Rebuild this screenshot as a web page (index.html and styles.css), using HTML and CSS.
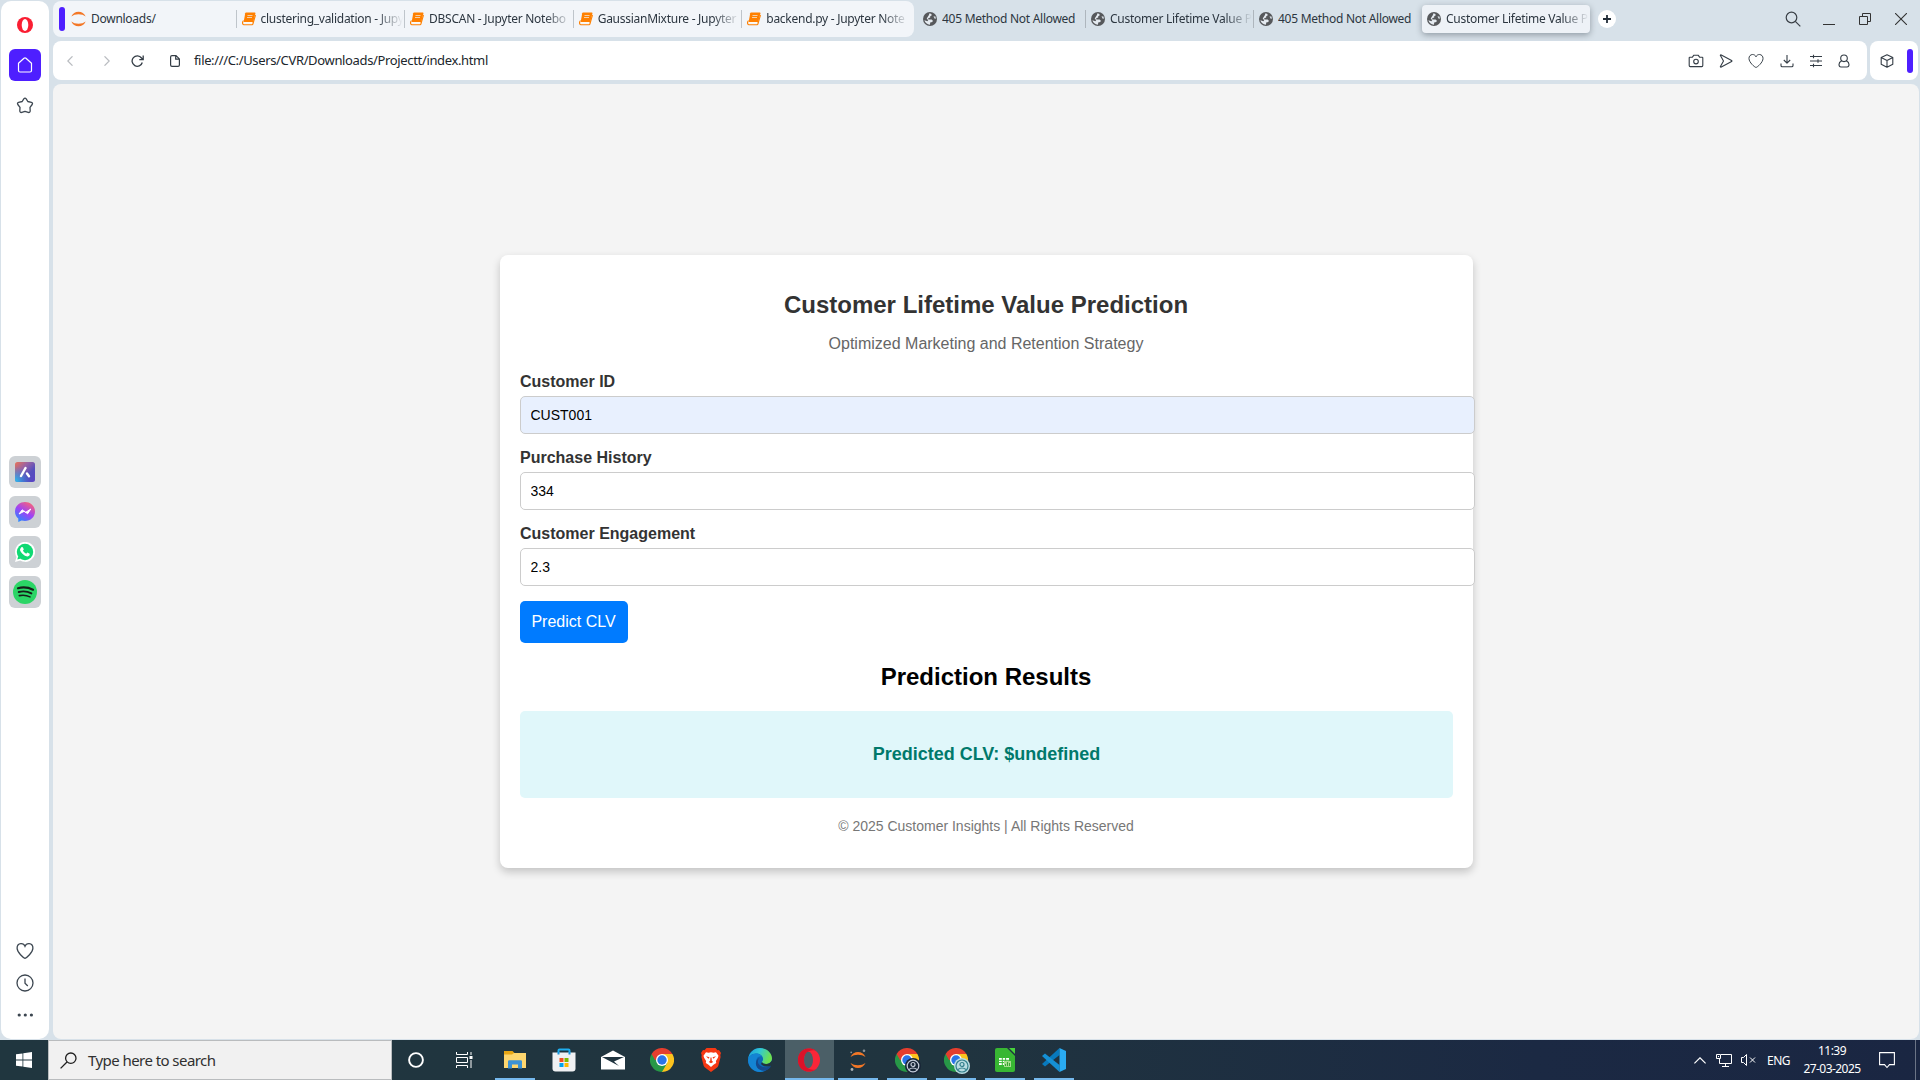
FILE: index.html
```html
<!DOCTYPE html>
<html lang="en">
<head>
<meta charset="utf-8">
<title>Customer Lifetime Value Prediction</title>
<link rel="stylesheet" href="styles.css">
</head>
<body>
<svg class="defs" width="0" height="0">
  <defs>
    <symbol id="book" viewBox="0 0 14 14">
      <path d="M4 .6h8.800q.8 0 .6.8l-2.300 9H1.600L3.200 1.300Q3.400.6 4 .6z" fill="#ff8000"/>
      <path d="M1.500 8.500Q0 10.300.8 12.100q.3.6 1.100.6h8.200q.6 0 .8-.7L13.500 3" fill="none" stroke="#ff8000" stroke-width="1.100"/>
      <path d="M5.500 3.500h5M5 5.500h5" stroke="#f2d9bd" stroke-width=".9"/>
      <path d="M1.700 10.600h8.600" stroke="#fff" stroke-width="1"/>
    </symbol>
    <symbol id="globe" viewBox="0 0 14 14">
      <circle cx="7" cy="7" r="7" fill="#56585b"/>
      <path d="M6.500 1.300Q9 1.600 8.800 3.200L7.200 4.300v1.300l-2 .7.200 1.100h3.200l1.300 1.400-.6 1.300-2.100.5-.2 2.100Q2.500 12.300 1.400 8.300l3 .9.800-1-1.500-1.600L5.800 3.300z" fill="#e4eaf0"/>
      <path d="M10.500 4.200l2 .3.500 2.200-1.600-.3z" fill="#d3dae0"/>
    </symbol>
    <symbol id="heart" viewBox="0 0 18 18">
      <path d="M9 16.300C7.500 16 1.200 10.600 1.100 6.300 1 3.400 2.900 1.900 4.900 1.700 6.700 1.600 8.300 2.500 9 4.300 9.700 2.500 11.300 1.600 13.100 1.700c2 .2 3.900 1.700 3.800 4.600C16.800 10.600 10.500 16 9 16.300z"/>
    </symbol>
    <symbol id="chrome" viewBox="0 0 24 24">
      <path d="M12 12L1.600 6A12 12 0 0 1 22.400 6z" fill="#e43e2e"/>
      <path d="M12 12V6h10.400A12 12 0 0 1 12 24z" fill="#fcc31e"/>
      <path d="M1.600 6A12 12 0 0 0 12 24l5.200-9L12 12z" fill="#279847"/>
      <path d="M1.600 6L12 6v6H5z" fill="#e43e2e"/>
      <circle cx="12" cy="12" r="6" fill="#fff"/>
      <circle cx="12" cy="12" r="4.700" fill="#2a74e8"/>
    </symbol>
  </defs>
</svg>

<div class="desktop">
  <div class="browser">
    <aside class="sidebar">
      <svg class="opera-menu" width="16" height="16" viewBox="0 0 16 16"><ellipse cx="8" cy="8" rx="8" ry="8" fill="#fa1e32"/><ellipse cx="8" cy="8" rx="3.300" ry="5.900" fill="#fff"/></svg>
      <div class="home"><svg width="16" height="16" viewBox="0 0 16 16" fill="none" stroke="#fff" stroke-width="1.200" stroke-linejoin="round"><path d="M1.500 6.300L7 1.300q1-.8 2 0l5.500 5V13.500q0 1.500-1.500 1.500H3q-1.500 0-1.500-1.500z"/></svg></div>
      <svg class="star" width="18" height="18" viewBox="0 0 18 18" fill="none" stroke="#3c4650" stroke-width="1.300" stroke-linejoin="round"><path d="M7.800 1.900q1.200-1.400 2.400 0l1.600 2.600 3.600.9q1.700.6.800 2.100l-2.200 2.900.2 3.600q-.2 1.900-2 1.400L9 14.300l-3.200 1.100q-1.800.5-2-1.400l.2-3.600L1.800 7.500Q.9 6 2.600 5.400l3.600-.9z"/></svg>
      <div class="apps">
        <div class="app"><svg width="20" height="20" viewBox="0 0 20 20"><defs><linearGradient id="aria" x1="0" y1="0" x2="1" y2="1"><stop offset="0" stop-color="#eb7354"/><stop offset=".35" stop-color="#9863a5"/><stop offset=".65" stop-color="#544ebd"/><stop offset="1" stop-color="#5a43c5"/></linearGradient><radialGradient id="ariac" cx="0" cy="1" r=".8"><stop offset="0" stop-color="#23c5f2"/><stop offset="1" stop-color="#3b86df" stop-opacity="0"/></radialGradient></defs><rect width="20" height="20" rx="2.500" fill="url(#aria)"/><rect width="20" height="20" rx="2.500" fill="url(#ariac)"/><path d="M10.500 6L6 14" stroke="#fff" stroke-width="2.400" stroke-linecap="round"/><path d="M12 11.500l2 2.700" stroke="#fff" stroke-width="2.400" stroke-linecap="round"/></svg></div>
        <div class="app"><svg width="20" height="20" viewBox="0 0 20 20"><defs><linearGradient id="msg" x1=".2" y1="1" x2=".8" y2="0"><stop offset="0" stop-color="#238cff"/><stop offset=".5" stop-color="#9f43f5"/><stop offset="1" stop-color="#ff6570"/></linearGradient></defs><path d="M10 0C4.500 0 0 4 0 9.500c0 3 1.300 5.400 3.300 7V20l3.300-1.500c1 .3 2.200.5 3.400.5 5.500 0 10-4 10-9.500S15.500 0 10 0z" fill="url(#msg)"/><path d="M4 12l3.200-4.200 3.300 2.600L15.800 7l-3.200 4.800-3.300-2.600z" fill="#fff" stroke="#fff" stroke-linejoin="round"/></svg></div>
        <div class="app"><svg width="20" height="20" viewBox="0 0 20 20"><path d="M0 20l1.500-5A10 10 0 1 1 5.200 18.600z" fill="#fff"/><circle cx="10" cy="10" r="8.200" fill="#10d973"/><path d="M2.300 17.600l1-3.500 2.500 2.500z" fill="#10d973"/><path d="M6.300 5.200q1.200-.8 1.800.6l.7 1.700-.9 1.300q1.300 2.200 3.300 3l1.200-1.200 2.300 1.200q.6 1.500-1.500 2.500-2.800.6-5.800-2.500T5.200 7z" fill="#fff"/></svg></div>
        <div class="app"><svg width="24" height="24" viewBox="0 0 24 24"><circle cx="12" cy="12" r="12" fill="#2bd566"/><g fill="none" stroke="#151e19" stroke-linecap="round"><path d="M5 8.200q8-2 15 1.500" stroke-width="2.200"/><path d="M5.700 12q7-1.700 12.700 1.400" stroke-width="1.900"/><path d="M6.300 15.600q6-1.200 10.700 1.300" stroke-width="1.600"/></g></svg></div>
      </div>
      <div class="side-tools">
        <svg width="18" height="18" fill="none" stroke="#3c4650" stroke-width="1.300"><use href="#heart"/></svg>
        <svg width="18" height="18" viewBox="0 0 18 18" fill="none" stroke="#3c4650" stroke-width="1.300"><circle cx="9" cy="9" r="8"/><path d="M9 4.500V9.300l2.800 2.600"/></svg>
        <svg width="18" height="18" viewBox="0 0 18 18" fill="#3c4650"><circle cx="3.200" cy="9" r="1.600"/><circle cx="9.300" cy="9" r="1.600"/><circle cx="15.400" cy="9" r="1.600"/></svg>
      </div>
    </aside>

    <div class="main">
      <header class="tabbar">
        <div class="island">
          <span class="workspace-bar"></span>
          <div class="tab tab-first"><svg class="fav" width="15" height="16" viewBox="0 0 15 16" fill="#f37726"><path d="M.3 5.500Q2.500.8 7.500.8t7.200 4.700Q12 3.300 7.500 3.300T.3 5.500z"/><path d="M.3 10.500q2.200 4.700 7.200 4.700t7.200-4.700q-2.700 2.200-7.200 2.200T.3 10.500z"/></svg><span class="label">Downloads/</span></div>
          <div class="tab"><svg class="fav" width="14" height="14"><use href="#book"/></svg><span class="label fade">clustering_validation - Jupy</span></div>
          <div class="tab"><svg class="fav" width="14" height="14"><use href="#book"/></svg><span class="label fade">DBSCAN - Jupyter Notebo</span></div>
          <div class="tab"><svg class="fav" width="14" height="14"><use href="#book"/></svg><span class="label fade">GaussianMixture - Jupyter</span></div>
          <div class="tab"><svg class="fav" width="14" height="14"><use href="#book"/></svg><span class="label fade">backend.py - Jupyter Note</span></div>
        </div>
        <div class="tab loose"><svg class="fav" width="14" height="14"><use href="#globe"/></svg><span class="label">405 Method Not Allowed</span></div>
        <div class="tab loose sep"><svg class="fav" width="14" height="14"><use href="#globe"/></svg><span class="label fade">Customer Lifetime Value P</span></div>
        <div class="tab loose sep"><svg class="fav" width="14" height="14"><use href="#globe"/></svg><span class="label">405 Method Not Allowed</span></div>
        <div class="tab active"><svg class="fav" width="14" height="14"><use href="#globe"/></svg><span class="label fade">Customer Lifetime Value P</span></div>
        <div class="new-tab"><svg width="8" height="8" viewBox="0 0 8 8" stroke="#222d38" stroke-width="1.800"><path d="M4 0v8M0 4h8"/></svg></div>
        <div class="window-controls">
          <svg width="16" height="16" viewBox="0 0 16 16" fill="none" stroke="#3a4047" stroke-width="1.200"><circle cx="6.500" cy="6.500" r="5.300"/><path d="M10.300 10.300l5 5"/></svg>
          <svg width="12" height="16" viewBox="0 0 12 16" stroke="#333" stroke-width="1"><path d="M0 13.500h12"/></svg>
          <svg width="12" height="12" viewBox="0 0 12 12" fill="none" stroke="#333" stroke-width="1"><path d="M.5 3.500h8v8h-8zM3.500 3.500v-3h8v8h-3"/></svg>
          <svg width="12" height="12" viewBox="0 0 12 12" stroke="#333" stroke-width="1.100"><path d="M0 0l12 12M12 0L0 12"/></svg>
        </div>
      </header>

      <div class="toolbar">
        <div class="address">
          <div class="nav">
            <svg width="6" height="10" viewBox="0 0 6 10" fill="none" stroke="#b9bcc0" stroke-width="1.200"><path d="M5.500.3L.8 5l4.700 4.700"/></svg>
            <svg width="6" height="10" viewBox="0 0 6 10" fill="none" stroke="#b9bcc0" stroke-width="1.200"><path d="M.5.3L5.200 5 .5 9.700"/></svg>
            <svg width="13" height="12" viewBox="0 0 13 12" fill="none" stroke="#343d46" stroke-width="1.300"><path d="M11.300 7.500A5.200 5.200 0 1 1 10.500 3L12 4.500M12.200.5v4.200H8.300"/></svg>
            <svg width="10" height="12" viewBox="0 0 10 12" fill="none" stroke="#343d46" stroke-width="1.200"><path d="M2 .6h4l3.400 3.300V10q0 1.400-1.400 1.400H2Q.6 11.400.6 10V2Q.6.6 2 .6zM5.700.6v3.600h3.700"/></svg>
          </div>
          <span class="url">file:///C:/Users/CVR/Downloads/Projectt/index.html</span>
          <div class="actions">
            <svg width="16" height="14" viewBox="0 0 16 14"><path d="M1.800 3.200h2.600L5.900 1.200h4.200l1.500 2h2.600q.6 0 .6.600v7.800q0 1-1 1H2.200q-1 0-1-1V3.800q0-.6.600-.6z"/><circle cx="8" cy="7.600" r="2.300"/></svg>
            <svg width="14" height="14" viewBox="0 0 14 14"><path d="M1.300 1.200q.3-.5 1-.2l10.300 5.400q.7.600 0 1.200L2.300 13q-.7.300-1-.2L4.500 7z"/></svg>
            <svg width="16" height="16"><use href="#heart"/></svg>
            <svg width="14" height="14" viewBox="0 0 14 14"><path d="M7 1v8M3.800 6L7 9.200 10.200 6M1 9.500v2q0 1.300 1.300 1.300h9.400q1.300 0 1.300-1.300v-2"/></svg>
            <svg width="14" height="14" viewBox="0 0 14 14"><path d="M1 2.500h12M1 7h12M1 11.500h12M4.500.8v3.400M9 5.300v3.400M4.500 9.800v3.400"/></svg>
            <svg width="12" height="14" viewBox="0 0 12 14"><circle cx="6" cy="4.300" r="3.300"/><path d="M3.500 7Q1 8 1 10.500q0 2.500 2 2.500h6q2 0 2-2.500Q11 8 8.500 7"/></svg>
          </div>
        </div>
        <div class="extension">
          <svg width="14" height="14" viewBox="0 0 14 14"><path d="M7 .7l5.800 2.800v6.800L7 13.300 1.200 10.300V3.500zM1.200 3.500L7 6.500l5.800-3M7 6.500v6.800"/></svg>
          <span class="workspace-bar"></span>
        </div>
      </div>

      <main class="page">
        <section class="card">
          <h1>Customer Lifetime Value Prediction</h1>
          <p class="subtitle">Optimized Marketing and Retention Strategy</p>
          <form>
            <label>Customer ID</label>
            <input class="autofilled" type="text" value="CUST001">
            <label>Purchase History</label>
            <input type="text" value="334">
            <label>Customer Engagement</label>
            <input type="text" value="2.3">
            <button type="button">Predict CLV</button>
          </form>
          <h2>Prediction Results</h2>
          <div class="result">Predicted CLV: $undefined</div>
          <footer>© 2025 Customer Insights | All Rights Reserved</footer>
        </section>
      </main>
    </div>
  </div>

  <div class="taskbar">
    <div class="start"><svg width="16" height="16" viewBox="0 0 16 16" fill="#fff"><path d="M0 2.300L6.500 1.400V7.600H0zM7.300 1.300L16 0V7.600H7.300zM0 8.400H6.500V14.600L0 13.700zM7.300 8.400H16V16L7.300 14.700z"/></svg></div>
    <div class="search"><svg width="17" height="17" viewBox="0 0 17 17" fill="none" stroke="#1f1f1f" stroke-width="1.300"><circle cx="10.800" cy="6.200" r="5.200"/><path d="M7 10L.6 16.400"/></svg><span>Type here to search</span></div>
    <div class="system-item"><svg width="16" height="16" viewBox="0 0 16 16"><circle cx="8" cy="8" r="6.900" fill="none" stroke="#fff" stroke-width="1.900"/></svg></div>
    <div class="system-item"><svg width="17" height="16" viewBox="0 0 17 16" fill="none" stroke="#fff"><path d="M.5 0v2.500h11V0M.5 5.500h11v5H.5zM.5 16v-2.500h11V16M15 0v3M15 8v8"/><rect x="13.500" y="4" width="3" height="3" fill="#fff" stroke="none"/></svg></div>
    <div class="items">
      <div class="item open"><svg width="22" height="18" viewBox="0 0 22 18"><path d="M0 0h8.500l2 2H21v15H0z" fill="#e8a614"/><path d="M0 3.500h8l2-1.500h12v15H0z" fill="#fed66e"/><path d="M4 17.500v-7q0-1.200 1.200-1.200h11.600q1.200 0 1.200 1.200v7h-4V13.500H8v4z" fill="#3c92d5"/></svg></div>
      <div class="item"><svg width="24" height="24" viewBox="0 0 24 24"><path d="M6.500 7V2.500q0-1 1-1h9q1 0 1 1V7" fill="none" stroke="#1faff0" stroke-width="2"/><path d="M.5 4.500h23v16q0 3-3 3h-17q-3 0-3-3z" fill="#f0f1f3"/><path d="M6.500 4v2.500M17.500 4v2.500" stroke="#1594dc" stroke-width="2"/><path d="M7.500 10h4v4h-4z" fill="#f25022"/><path d="M12.500 10h4v4h-4z" fill="#7fba00"/><path d="M7.500 15h4v4h-4z" fill="#00a4ef"/><path d="M12.500 15h4v4h-4z" fill="#ffb900"/></svg></div>
      <div class="item"><svg width="24" height="20" viewBox="0 0 24 20"><path d="M0 7L12 .5 24 7v12.500H0z" fill="#fff"/><path d="M1 7h22L13 11.500l5 4.500z" fill="#20343f"/></svg></div>
      <div class="item"><svg width="24" height="24"><use href="#chrome"/></svg></div>
      <div class="item"><svg width="20" height="24" viewBox="0 0 20 24"><path d="M5.500 0h9l2 2.300 1.500-.3 2 3-.7 2 .3 2-2.200 8.500q-.5 1.500-2 2.500L10 24l-5.400-4q-1.500-1-2-2.500L.4 9l.3-2L0 5l2-3 1.500.3z" fill="#f63813"/><path d="M5 4.300l2.500.5L10 4.300l2.500.5 2.500-.5 2.500 3.500-.6 2-2 3.200.3 2-2.700 1.700L10 19l-2.500-2.300L4.800 15l.3-2-2-3.200-.6-2z" fill="#fff"/><path d="M5 8.300l3.500.9-1 1.500zM15 8.300l-3.500.9 1 1.500zM9.500 9.500h1l.3 3.300 1.400 1.200-2.200 1.200L7.800 14l1.400-1.200z" fill="#f63813"/></svg></div>
      <div class="item"><svg width="24" height="24" viewBox="0 0 24 24"><defs><linearGradient id="edge" x1="0" y1="0" x2="1" y2=".3"><stop offset="0" stop-color="#199bdc"/><stop offset=".5" stop-color="#31c7d5"/><stop offset="1" stop-color="#6de150"/></linearGradient></defs><circle cx="12" cy="12" r="12" fill="#0c68b8"/><path d="M0 11.500C1 4.500 6 0 12 0c7 0 12 5 12 10.500 0 3-2.300 5.500-6 5.500-2.500 0-4-1-4-2 0-.6 1.100-1.200 1.100-3C15 7.500 11.500 5.500 8 5.500 3.500 5.500.8 8.500 0 11.500z" fill="url(#edge)"/><path d="M0 12c.5-3.500 4-6.500 8-6.500 2.500 0 5 1 6.300 3C10 7.500 8 11 8 14c0 5 4.500 8.500 8 9.300C8 26 0 20 0 12z" fill="#1484d3"/><path d="M11.800 9.700c-2 1.500-3 5 0 7.500 3.500 3 8 2 10 1 .8-.3 1 .3.700.7-2 3.500-6.500 4.300-10 3.100-5.500-2-6.500-10-.7-12.300z" fill="#15498d"/><path d="M14 14q1 2 4 2 3.500 0 6-3.500v4.500l-2.200 1.200Q16 19.500 13 16z" fill="#20343f"/></svg></div>
      <div class="item open current"><svg width="22" height="24" viewBox="0 0 22 24"><ellipse cx="11" cy="12" rx="11" ry="11.500" fill="#fa2638"/><path d="M11 .5C2 .5 0 8 0 12s2 11.500 11 11.500c4 0 7-2 7-2C9 23 6 17 6 12S9 1 18 2.500c0 0-3-2-7-2z" fill="#dc1228"/><ellipse cx="10.500" cy="12" rx="4.500" ry="8.300" fill="#4b5f67"/></svg></div>
      <div class="item open"><svg width="16" height="22" viewBox="0 0 16 22"><path d="M.5 8Q3 3 8 3t7.500 5Q12.500 5.800 8 5.800T.5 8zM.5 14Q3 19 8 19t7.500-5q-3 2.200-7.500 2.200T.5 14z" fill="#f37726"/><circle cx="14" cy="1.700" r="1.300" fill="#8b9298"/><circle cx="1.200" cy="3.300" r=".9" fill="#8b9298"/><circle cx="2" cy="20.500" r="1.400" fill="#aeb4b8"/></svg></div>
      <div class="item open"><svg width="24" height="24"><use href="#chrome"/></svg><svg class="badge" width="16" height="16" viewBox="0 0 16 16"><circle cx="8" cy="8" r="8" fill="#182637"/><g fill="none" stroke="#c6cedb" stroke-width="1.200"><circle cx="8" cy="8" r="5.800"/><circle cx="8" cy="6.500" r="2"/><path d="M4 11.500q4-3 8 0"/></g></svg></div>
      <div class="item open"><svg width="24" height="24"><use href="#chrome"/></svg><svg class="badge" width="16" height="16" viewBox="0 0 16 16"><circle cx="8" cy="8" r="8" fill="#b8dce2"/><g fill="none" stroke="#337f8c" stroke-width="1.200"><circle cx="8" cy="8" r="6"/><circle cx="8" cy="6.500" r="2"/><path d="M4 11.500q4-3 8 0"/></g></svg></div>
      <div class="item open"><svg width="20" height="24" viewBox="0 0 20 24"><path d="M2 0h10l8 8v14q0 2-2 2H2q-2 0-2-2V2Q0 0 2 0z" fill="#38b733"/><path d="M14 0H20v6z" fill="#48d33c"/><path d="M4 10h10v7H4z" fill="#fff"/><path d="M4 12.300h10M4 14.600h10M7.300 10v7M10.600 10v7" stroke="#38b733"/><rect x="9" y="13" width="7" height="6" fill="#a5dc8e"/><path d="M10.500 18v-2M12.500 18v-4M14.500 18v-3" stroke="#38a633"/></svg></div>
      <div class="item open"><svg width="24" height="24" viewBox="0 0 24 24"><path d="M17.500 0v7L3 18.500 0 16z" fill="#0879bd"/><path d="M0 8l3-2.500L17.500 17v7z" fill="#1590d5"/><path d="M17.500 0L24 3v18l-6.500 3z" fill="#2aabf2"/></svg></div>
    </div>
    <div class="tray">
      <svg class="chevron" width="12" height="7" viewBox="0 0 12 7" fill="none" stroke="#fff" stroke-width="1.200"><path d="M.4 6.400L6 .8l5.600 5.600"/></svg>
      <svg class="network" width="16" height="13" viewBox="0 0 16 13" fill="none" stroke="#fff"><path d="M5 .5h10.500v9H3.500V4.500M.5.500h4v4h-4zM2 2.500h1M6 12.500h7M9.500 10v2"/></svg>
      <svg class="volume" width="15" height="12" viewBox="0 0 15 12" fill="none" stroke="#fff"><path d="M.5 3.500h2l3-3v11l-3-3h-2zM9 3.500l5 5M14 3.500l-5 5"/></svg>
      <span class="language">ENG</span>
      <div class="clock"><span>11:39</span><span class="date">27-03-2025</span></div>
      <svg class="notice" width="16" height="17" viewBox="0 0 16 17" fill="none" stroke="#fff" stroke-width="1.100"><path d="M.6.600h14.800v12H10.500L8 15.500 5.500 12.600H.6z"/></svg>
      <span class="peek"></span>
    </div>
  </div>
</div>
</body>
</html>
```
FILE: styles.css
```css
* { box-sizing: border-box; }

body {
  margin: 0;
  font-family: "Noto Sans", "Open Sans", sans-serif;
  background: #d7e1e9;
}

svg { display: block; flex: none; }
.defs { position: absolute; }

.desktop {
  width: 1920px;
  height: 1080px;
  overflow: hidden;
  display: flex;
  flex-direction: column;
}

.browser {
  height: 1040px;
  padding: 1px 1px 1px;
  display: flex;
  gap: 4px;
}

/* Sidebar */
.sidebar {
  width: 48px;
  height: 1038px;
  padding: 16px 8px 0;
  background: #fff;
  border-radius: 10px;
  display: flex;
  flex-direction: column;
  align-items: center;
}
.home, .app {
  width: 32px;
  height: 32px;
  border-radius: 6px;
  display: flex;
  align-items: center;
  justify-content: center;
}
.home { margin-top: 16px; background: #4e1fff; }
.star { margin-top: 16px; }
.apps {
  margin-top: 341px;
  display: flex;
  flex-direction: column;
  gap: 8px;
}
.app { background: #cdd1d5; }
.side-tools {
  margin: 334px 0 0 -1px;
  display: flex;
  flex-direction: column;
  gap: 14px;
}

/* Tab strip */
.main {
  flex: 1;
  min-width: 0;
  display: flex;
  flex-direction: column;
}
.tabbar {
  height: 36px;
  display: flex;
  align-items: center;
}
.island {
  width: 861px;
  height: 36px;
  padding-left: 6px;
  background: #f2f5f9;
  border-radius: 8px;
  display: flex;
  align-items: center;
}
.workspace-bar {
  width: 6px;
  height: 24px;
  border-radius: 3px;
  background: #4e1fff;
  flex: none;
}
.tab {
  width: 168.600px;
  height: 28px;
  padding-left: 5px;
  display: flex;
  align-items: center;
  flex: none;
  font-size: 12px;
  letter-spacing: -0.270px;
  color: #2c3640;
}
.tab .fav { margin-right: 5px; }
.island .tab + .tab {
  padding-left: 0;
}
.island .tab + .tab::before, .sep::before {
  content: "";
  width: 1px;
  height: 18px;
  margin-right: 5px;
  background: #bfc5cb;
}
.tab-first { width: 170.500px; padding-left: 6px; }
.label {
  flex: 1;
  overflow: hidden;
  white-space: nowrap;
  line-height: 18px;
  padding-bottom: 1px;
}
.fade {
  -webkit-mask-image: linear-gradient(to right, #000 calc(100% - 28px), transparent calc(100% - 1px));
  mask-image: linear-gradient(to right, #000 calc(100% - 28px), transparent calc(100% - 1px));
}
.loose { width: 168px; }
.island + .loose { width: 171px; padding-left: 9px; }
.sep { padding-left: 0; }
.sep::before { background: #aeb6bd; }
.active {
  width: 168px;
  margin-left: 1px;
  background: #eef2f7;
  border-radius: 4px;
  box-shadow: 0 2px 6px rgba(40, 50, 60, .4);
}
.new-tab {
  width: 18px;
  height: 18px;
  margin-left: 8px;
  border-radius: 50%;
  background: #fff;
  display: flex;
  align-items: center;
  justify-content: center;
}
.window-controls {
  margin: 0 12px 0 auto;
  display: flex;
  align-items: center;
  gap: 24px;
}
.window-controls svg:first-child { margin-right: -2px; }

/* Address row */
.toolbar {
  height: 39px;
  margin-top: 4px;
  display: flex;
  gap: 3px;
}
.address, .extension {
  background: #fff;
  border-radius: 8px;
  display: flex;
  align-items: center;
}
.address { width: 1814px; padding: 0 17px 0 14px; }
.nav {
  display: flex;
  align-items: center;
  gap: 26px;
}
.nav svg:nth-child(2) { margin-left: 5px; }
.nav svg:nth-child(3) { margin-left: -5px; }
.url {
  margin-left: 14px;
  padding-bottom: 1px;
  font-size: 13px;
  letter-spacing: -0.350px;
  color: #20262c;
}
.actions {
  margin-left: auto;
  display: flex;
  align-items: center;
  gap: 15.200px;
}
.actions svg, .extension svg {
  fill: none;
  stroke: #343d46;
  stroke-width: 1.100;
  stroke-linejoin: round;
}
.extension {
  width: 48px;
  padding: 0 5px 0 10px;
  justify-content: space-between;
}

/* Page */
.page {
  height: 955px;
  margin-top: 4px;
  padding-left: 447px;
  border-radius: 8px;
  background: #f4f4f4;
  display: flex;
  align-items: flex-start;
  font-family: "Liberation Sans", Arial, sans-serif;
}
.card {
  width: 973px;
  height: 613px;
  margin-top: 171px;
  padding: 36px 20px 0;
  background: #fff;
  border-radius: 8px;
  box-shadow: 0 4px 8px rgba(0, 0, 0, .2);
  color: #333;
}
.card h1, .card h2 {
  margin: 0 1px 0 0;
  font-size: 24px;
  line-height: 27px;
  text-align: center;
}
.subtitle {
  margin: 17px 1px 20px 0;
  font-size: 16px;
  line-height: 18px;
  color: #666;
  text-align: center;
}
form {
  display: flex;
  flex-direction: column;
  align-items: flex-start;
}
label {
  margin-bottom: 5px;
  font-weight: bold;
  font-size: 16px;
  line-height: 18px;
}
input {
  width: 955px;
  height: 38px;
  margin: 0 0 15px;
  padding: 10px 9.500px;
  border: 1px solid #ccc;
  border-radius: 5px;
  font: 14px "Liberation Sans", Arial, sans-serif;
  color: #000;
  background: #fff;
}
.autofilled { background: #e8f0fe; }
button {
  width: 108px;
  height: 42px;
  padding: 0 1px 0 0;
  border: 0;
  border-radius: 5px;
  background: #007bff;
  color: #fff;
  font: 16px "Liberation Sans", Arial, sans-serif;
}
.card h2 { margin-top: 20px; color: #000; }
.result {
  height: 87px;
  margin-top: 21px;
  border-radius: 5px;
  background: #e0f7fa;
  display: flex;
  align-items: center;
  justify-content: center;
  font-size: 18px;
  font-weight: bold;
  color: #00796b;
}
footer {
  margin: 20px 1px 0 0;
  font-size: 14px;
  line-height: 16px;
  color: #777;
  text-align: center;
}

/* Taskbar */
.taskbar {
  height: 40px;
  background: linear-gradient(to right, #20363f 0, #20343f 50%, #1b2943 80%, #1a2642);
  display: flex;
  color: #fff;
}
.start, .system-item {
  width: 48px;
  display: flex;
  align-items: center;
  justify-content: center;
}
.search {
  width: 344px;
  padding-left: 11px;
  border: 1px solid #b9bcbe;
  background: #f1f1f1;
  display: flex;
  align-items: center;
  gap: 11px;
  font-size: 15px;
  letter-spacing: -0.560px;
  color: #303030;
}
.items {
  margin-left: 2.500px;
  display: flex;
}
.item {
  position: relative;
  width: 49px;
  display: flex;
  align-items: center;
  justify-content: center;
}
.item.open::after {
  content: "";
  position: absolute;
  left: 4.500px;
  right: 4.500px;
  bottom: 0;
  height: 2px;
  background: #76b9ed;
}
.item.current { background: #4b5f67; }
.item.current::after { left: 0; right: 0; }
.badge { position: absolute; right: 11px; bottom: 6px; }

.tray {
  margin-left: auto;
  display: flex;
  align-items: center;
  font-size: 12px;
}
.network { margin-left: 10px; }
.volume { margin-left: 9px; }
.language { width: 24px; margin-left: 11px; letter-spacing: -0.500px; }
.clock {
  width: 60px;
  margin-left: 11px;
  display: flex;
  flex-direction: column;
  align-items: center;
  line-height: 18px;
  letter-spacing: -0.550px;
}
.notice { margin-left: 17px; }
.peek {
  width: 1px;
  height: 40px;
  margin: 0 4px 0 20px;
  background: #6b7486;
}
```
